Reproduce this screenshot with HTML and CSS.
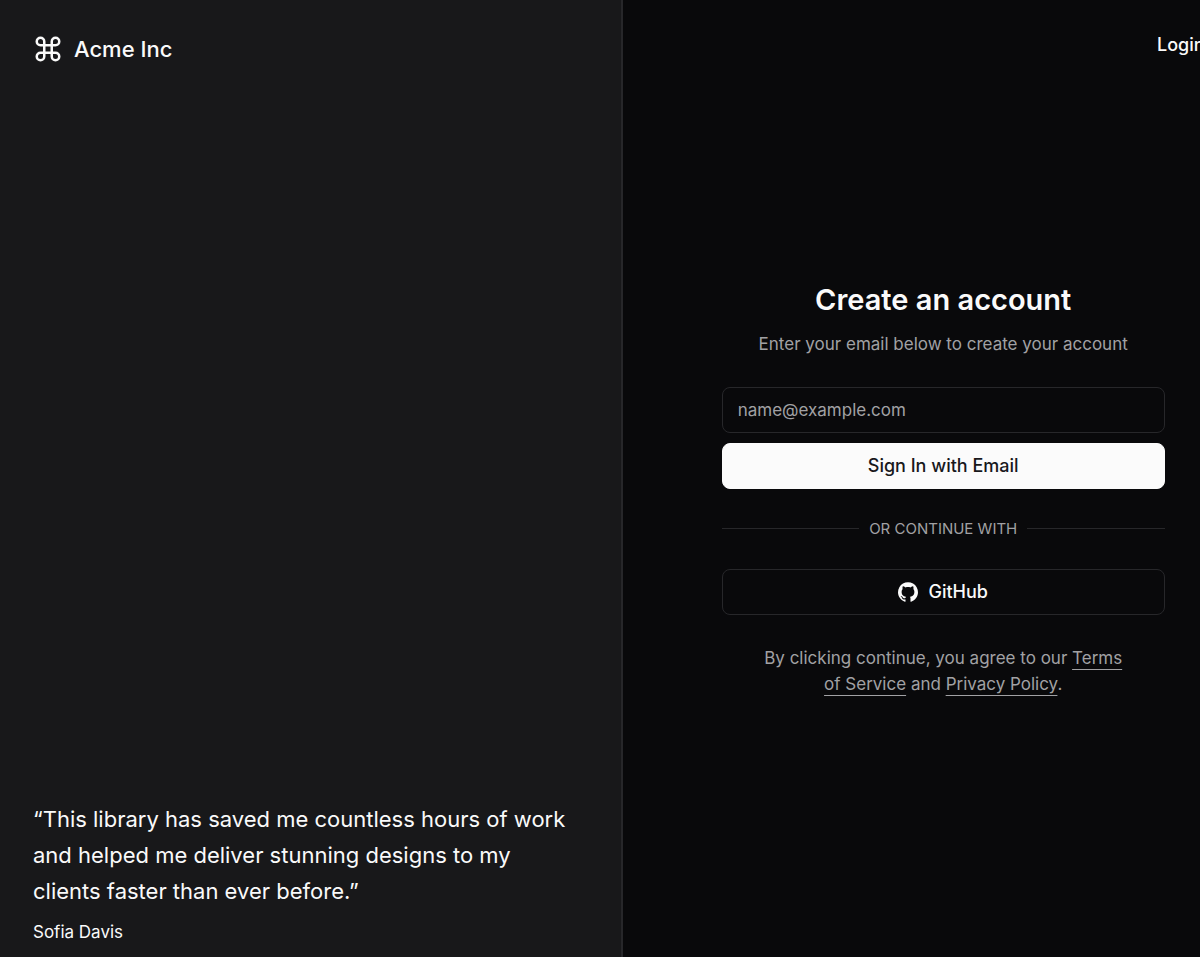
FILE: index.html
```
<!DOCTYPE html>
<html lang="en">
<head>
<meta charset="utf-8">
<meta name="viewport" content="width=device-width, initial-scale=1">
<title>Create an account</title>
<link rel="stylesheet" href="styles.css">
</head>
<body>
<div class="page">
  <aside class="showcase">
    <div class="brand">
      <svg class="brand-icon" viewBox="0 0 24 24" fill="none" stroke="currentColor" stroke-width="2" stroke-linecap="round" stroke-linejoin="round" aria-hidden="true"><path d="M15 6v12a3 3 0 1 0 3-3H6a3 3 0 1 0 3 3V6a3 3 0 1 0-3 3h12a3 3 0 1 0-3-3"/></svg>
      <span>Acme Inc</span>
    </div>
    <blockquote class="quote">
      <p class="quote-text">“This library has saved me countless hours of work and helped me deliver stunning designs to my clients faster than ever before.”</p>
      <footer class="quote-author">Sofia Davis</footer>
    </blockquote>
  </aside>
  <main class="auth">
    <nav class="auth-nav"><a class="login" href="#">Login</a></nav>
    <div class="card">
      <header class="intro">
        <h1 class="title">Create an account</h1>
        <p class="subtitle">Enter your email below to create your account</p>
      </header>
      <form class="form">
        <input class="field" type="email" placeholder="name@example.com" aria-label="Email">
        <button class="button button-primary" type="submit">Sign In with Email</button>
      </form>
      <div class="divider">Or continue with</div>
      <button class="button button-outline" type="button">
        <svg class="github" viewBox="0 0 438.549 438.549" fill="currentColor" aria-hidden="true"><path d="M409.132 114.573c-19.608-33.596-46.205-60.194-79.798-79.8-33.598-19.607-70.277-29.408-110.063-29.408-39.781 0-76.472 9.804-110.063 29.408-33.596 19.605-60.192 46.204-79.8 79.8C9.803 148.168 0 184.854 0 224.63c0 47.78 13.94 90.745 41.827 128.906 27.884 38.164 63.906 64.572 108.063 79.227 5.14.954 8.945.283 11.419-1.996 2.475-2.282 3.711-5.14 3.711-8.562 0-.571-.049-5.708-.144-15.417a2549.81 2549.81 0 01-.144-25.406l-6.567 1.136c-4.187.767-9.469 1.092-15.846 1-6.374-.089-12.991-.757-19.842-1.999-6.854-1.231-13.229-4.086-19.13-8.559-5.898-4.473-10.085-10.328-12.56-17.556l-2.855-6.57c-1.903-4.374-4.899-9.233-8.992-14.559-4.093-5.331-8.232-8.945-12.419-10.848l-1.999-1.431c-1.332-.951-2.568-2.098-3.711-3.429-1.142-1.331-1.997-2.663-2.568-3.997-.572-1.335-.098-2.43 1.427-3.289 1.525-.859 4.281-1.276 8.28-1.276l5.708.853c3.807.763 8.516 3.042 14.133 6.851 5.614 3.806 10.229 8.754 13.846 14.842 4.38 7.806 9.657 13.754 15.846 17.847 6.184 4.093 12.419 6.136 18.699 6.136 6.28 0 11.704-.476 16.274-1.423 4.565-.952 8.848-2.383 12.847-4.285 1.713-12.758 6.377-22.559 13.988-29.41-10.848-1.14-20.601-2.857-29.264-5.14-8.658-2.286-17.605-5.996-26.835-11.14-9.235-5.137-16.896-11.516-22.985-19.126-6.09-7.614-11.088-17.61-14.987-29.979-3.901-12.374-5.852-26.648-5.852-42.826 0-23.035 7.52-42.637 22.557-58.817-7.044-17.318-6.379-36.732 1.997-58.24 5.52-1.715 13.706-.428 24.554 3.853 10.85 4.283 18.794 7.952 23.84 10.994 5.046 3.041 9.089 5.618 12.135 7.708 17.705-4.947 35.976-7.421 54.818-7.421s37.117 2.474 54.823 7.421l10.849-6.849c7.419-4.57 16.18-8.758 26.262-12.565 10.088-3.805 17.802-4.853 23.134-3.138 8.562 21.509 9.325 40.922 2.279 58.24 15.036 16.18 22.559 35.787 22.559 58.817 0 16.178-1.958 30.497-5.853 42.966-3.9 12.471-8.941 22.457-15.125 29.979-6.191 7.521-13.901 13.85-23.131 18.986-9.232 5.14-18.182 8.85-26.84 11.136-8.662 2.286-18.415 4.004-29.263 5.146 9.894 8.562 14.842 22.077 14.842 40.539v60.237c0 3.422 1.19 6.279 3.572 8.562 2.379 2.279 6.136 2.95 11.276 1.995 44.163-14.653 80.185-41.062 108.068-79.226 27.88-38.161 41.825-81.126 41.825-128.906-.01-39.771-9.818-76.454-29.414-110.049z"/></svg>
        GitHub
      </button>
      <p class="terms">By clicking continue, you agree to our <a href="#">Terms of Service</a> and <a href="#">Privacy Policy</a>.</p>
    </div>
  </main>
</div>
</body>
</html>
```
FILE: styles.css
```
* { box-sizing: border-box; }

body {
  margin: 0;
  background: #09090b;
  color: #fafafa;
  font-family: Inter, "Liberation Sans", sans-serif;
  font-size: 17px;
  line-height: 26px;
}

h1, p, blockquote { margin: 0; }

/* The two panels run slightly wider than the window. */
.page {
  display: grid;
  grid-template-columns: 51.9vw 53.4vw;
  min-height: 100vh;
  overflow: hidden;
}

.showcase {
  display: flex;
  flex-direction: column;
  justify-content: space-between;
  padding: 31px 33px 12px;
  background: #18181a;
  border-right: 2px solid #27272a;
}

.brand {
  display: flex;
  align-items: center;
  gap: 11px;
  font-size: 22px;
  font-weight: 500;
  line-height: 36px;
}

.brand-icon { width: 30px; height: 30px; }

.quote {
  display: grid;
  gap: 10px;
  max-width: 540px;
}

.quote-text { font-size: 22px; line-height: 36px; }

.auth {
  display: grid;
  grid-template-rows: auto 1fr;
}

.auth-nav {
  display: flex;
  justify-content: flex-end;
  padding: 32px 59px 0;
}

.login {
  color: inherit;
  font-size: 18px;
  font-weight: 500;
  text-decoration: none;
}

.card {
  display: flex;
  flex-direction: column;
  place-self: center;
  gap: 30px;
  width: 443px;
  max-width: 100%;
  padding-bottom: 38px;
}

.intro {
  display: grid;
  gap: 12px;
  text-align: center;
}

.title {
  font-size: 29px;
  font-weight: 600;
  line-height: 38px;
}

.subtitle, .terms { color: #a1a1a4; }

.form { display: grid; gap: 10px; }

.field, .button {
  width: 100%;
  height: 46px;
  border: 1px solid #27272a;
  border-radius: 8px;
  background: transparent;
  color: #fafafa;
  font: inherit;
}

.field { padding: 0 15px; }
.field::placeholder { color: #a1a1a4; opacity: 1; }

.button {
  display: flex;
  align-items: center;
  justify-content: center;
  gap: 10px;
  font-size: 18px;
  font-weight: 500;
}

.button-primary {
  border-color: #fbfbfb;
  background: #fbfbfb;
  color: #18181b;
}

.github { width: 20px; height: 20px; }

.divider {
  display: flex;
  align-items: center;
  gap: 10px;
  color: #a1a1a4;
  font-size: 15px;
  line-height: 20px;
  text-transform: uppercase;
}

.divider::before, .divider::after {
  content: "";
  flex: 1;
  height: 1px;
  background: #27272a;
}

.terms {
  padding: 0 40px;
  text-align: center;
}

.terms a {
  color: inherit;
  text-decoration: underline;
  text-underline-offset: 5px;
}
```
